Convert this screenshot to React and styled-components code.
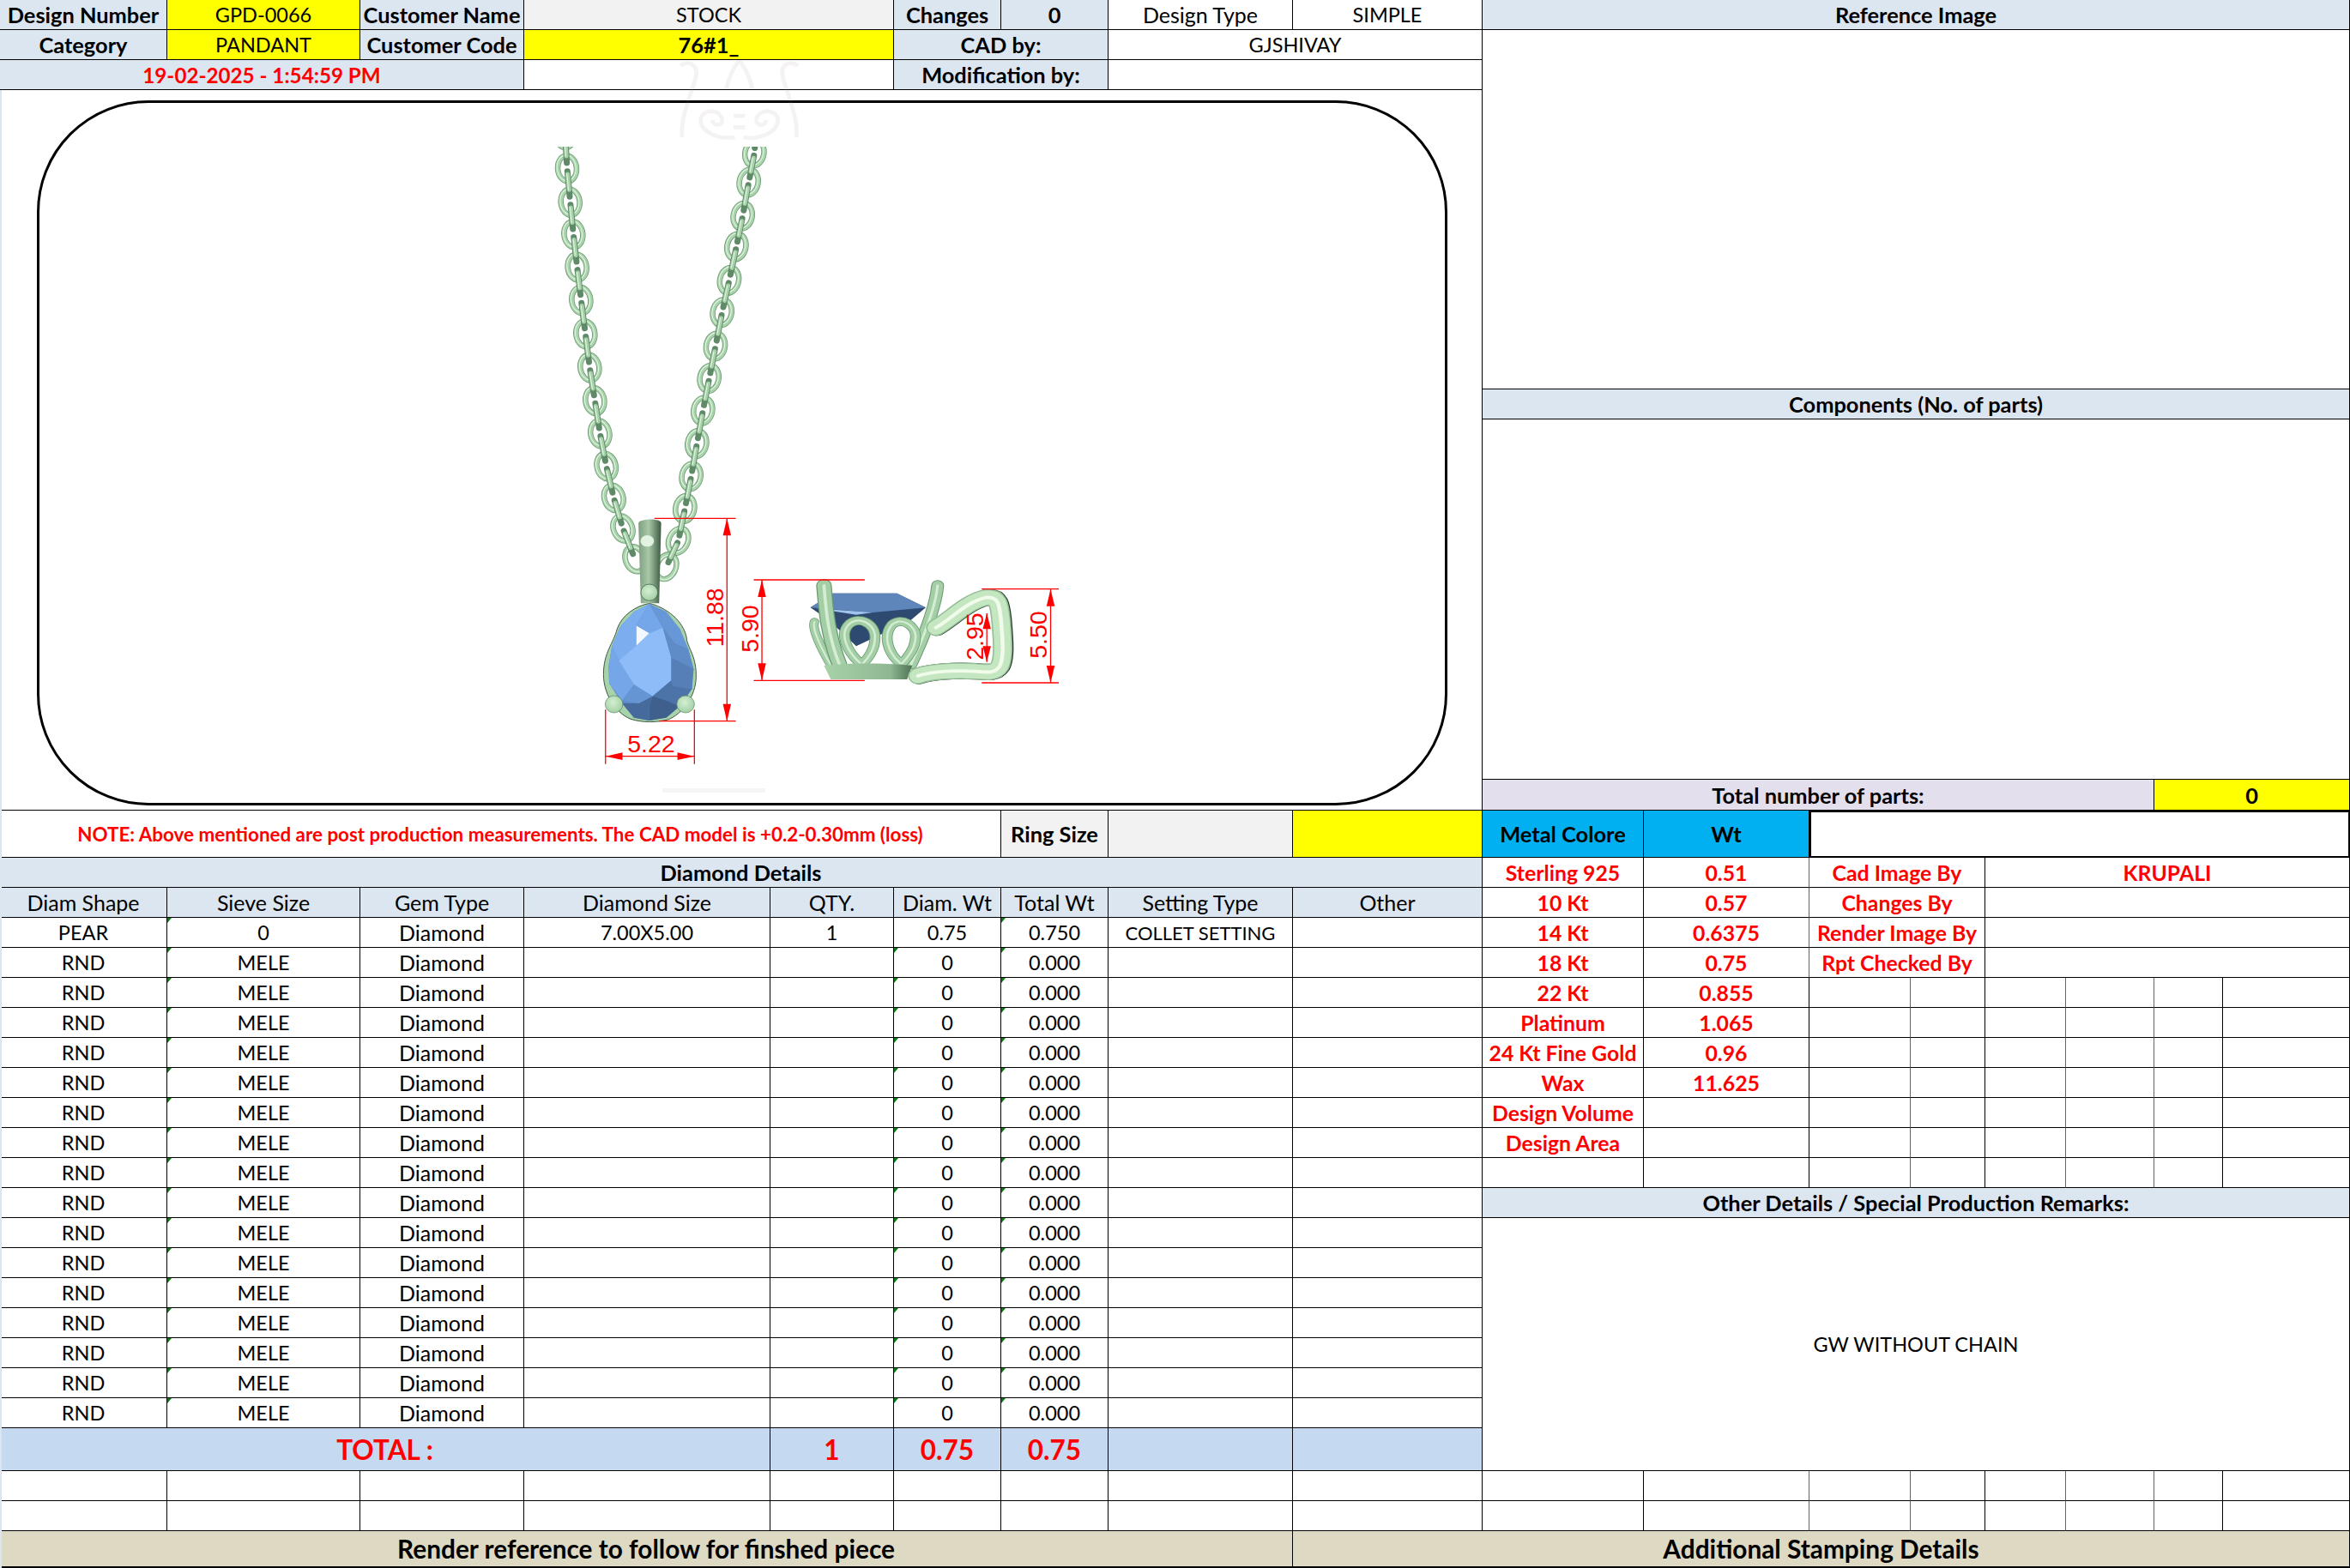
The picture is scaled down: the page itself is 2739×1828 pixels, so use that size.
import React from 'react';
import styled, { createGlobalStyle } from 'styled-components';

const GlobalStyle = createGlobalStyle`
  html, body {
    margin: 0;
    background: #fff;
  }
`;

const Sheet = styled.div`
  position: relative;
  display: grid;
  width: 2739px;
  height: 1828px;
  grid-template-columns: 195px 225px 191px 287px 144px 125px 125px 215px 221px 188px 193px 118px 87px 94px 103px 80px 148px;
  grid-template-rows: 35px 35px 35px 349px 35px 420px 36px 55px repeat(19, 35px) 50px 35px 35px 43px;
  font-family: Lato, 'Open Sans', sans-serif;
  font-size: 25px;
  color: #000;
  background: #fff;
  &::after {
    content: '';
    position: absolute;
    left: 0;
    top: 105px;
    bottom: 0;
    width: 2px;
    background: #dce6f1;
  }
`;

const Cell = styled.div`
  position: relative;
  box-sizing: border-box;
  display: flex;
  align-items: center;
  justify-content: center;
  grid-column: ${(p) => p.$c} / span ${(p) => p.$s || 1};
  grid-row: ${(p) => p.$r} / span ${(p) => p.$rs || 1};
  border-right: 1px solid ${(p) => (p.$thin ? '#666' : '#000')};
  border-bottom: 1px solid #000;
  background: ${(p) => p.$bg || '#fff'};
  white-space: nowrap;
  ${(p) => p.$note && `
    &::before {
      content: '';
      position: absolute;
      left: 0;
      top: 0;
      border-top: 6px solid #0a7a12;
      border-right: 5px solid transparent;
    }
  `}
`;

const Value = styled(Cell)`
  font-size: 23.5px;
`;

const SettingValue = styled(Value)`
  font-size: 22px;
`;

const Label = styled(Cell)`
  background: ${(p) => p.$bg || '#dce6f1'};
  font-size: 25.4px;
  font-weight: 700;
`;

const RedLabel = styled(Cell)`
  color: #ff0000;
  font-size: 24.8px;
  font-weight: 700;
`;

const DateCell = styled(RedLabel)`
  background: #dce6f1;
  font-size: 24.2px;
`;

const NoteCell = styled(RedLabel)`
  font-size: 22.4px;
`;

const TotalCell = styled(Cell)`
  background: #c5d9f1;
  color: #ff0000;
  font-size: 31.5px;
  font-weight: 700;
`;

const FooterCell = styled(Cell)`
  background: #ddd9c3;
  font-size: 29.8px;
  font-weight: 700;
  border-bottom: 2px solid #000;
`;

const MetalHead = styled(Label)`
  background: #00b0f0;
`;

const ThickBox = styled(Cell)`
  border: 2px solid #000;
`;

const DrawingCell = styled(Cell)`
  padding: 12px 40px 5px 43px;
  align-items: stretch;
`;

const Frame = styled.div`
  box-sizing: border-box;
  flex: 1;
  border: 3px solid #000;
  border-radius: 130px;
  overflow: hidden;
`;

const Drawing = styled.svg`
  display: block;
  width: 100%;
  height: 100%;
`;

const Watermark = styled.svg`
  position: absolute;
  left: 786px;
  top: 70px;
  width: 155px;
  height: 102px;
  opacity: 0.1;
`;

const DimText = styled.text`
  font-family: 'Liberation Sans', Arial, sans-serif;
  font-size: 28.5px;
  fill: #ff0000;
`;

// chain link centres read off the render, page coordinates
const toPage = ([x, y]) => [600 + x / 3, 150 + y / 2.8];
const leftStrand = [[176, 20], [183, 130], [194, 240], [205, 345], [218, 452], [232, 560], [247, 670], [262, 780], [280, 888], [298, 995], [320, 1102], [346, 1205], [378, 1305], [420, 1405]].map(toPage);
const rightStrand = [[845, -20], [838, 80], [818, 175], [797, 285], [775, 385], [750, 495], [725, 600], [702, 710], [680, 815], [658, 920], [637, 1028], [617, 1135], [595, 1240], [572, 1345], [530, 1430]].map(toPage);

const Chain = ({ points }) => (
  <g fill="none" strokeLinecap="round">
    {points.map(([x, y], i) => {
      const next = points[i + 1] || points[i - 1];
      const deg = (Math.atan2(next[1] - y, next[0] - x) * 180) / Math.PI - 90;
      return (
        <g key={i} transform={`rotate(${deg} ${x} ${y})`}>
          <ellipse cx={x} cy={y} rx="11" ry="15" stroke="#6c9874" strokeWidth="6.4" />
          <ellipse cx={x} cy={y} rx="11" ry="15" stroke="#a9d3ab" strokeWidth="4.8" />
          <ellipse cx={x - 0.7} cy={y - 0.7} rx="11" ry="15" stroke="#e2f5e0" strokeWidth="1.1" />
        </g>
      );
    })}
    {points.slice(0, -1).map(([x, y], i) => {
      const [nx, ny] = points[i + 1];
      const dx = (nx - x) / 6;
      const dy = (ny - y) / 6;
      return (
        <g key={i}>
          <line x1={x + dx / 2} y1={y + dy / 2} x2={nx - dx} y2={ny - dy} stroke="#5f8a68" strokeWidth="7" />
          <line x1={x + dx} y1={y + dy} x2={nx - 2.2 * dx} y2={ny - 2.2 * dy} stroke="#a5d0a8" strokeWidth="5" />
          <line x1={x + dx - 0.8} y1={y + dy} x2={nx - 2.2 * dx - 0.8} y2={ny - 2.2 * dy} stroke="#e0f4de" strokeWidth="1.2" />
        </g>
      );
    })}
  </g>
);

const Tube = ({ d, w, dark = '#6a9a72', main = '#a4cfa6', light = '#d5eed3' }) => (
  <g fill="none" strokeLinecap="round" strokeLinejoin="round">
    <path d={d} stroke={dark} strokeWidth={w} />
    <path d={d} stroke={main} strokeWidth={w * 0.86} />
    <path d={d} stroke={light} strokeWidth={w * 0.2} />
  </g>
);

const facets = [
  ['#5d8ac4', '270,342 320,370 360,430 385,500 401,570 396,640 360,700 320,740 270,750 225,740 190,690 152,620 150,560 160,490 185,420 225,370'],
  ['#7cadef', '270,342 225,370 185,420 160,490 180,540 232,490 232,415'],
  ['#74a6ea', '270,342 232,415 270,445 310,425'],
  ['#6797d6', '270,342 310,425 345,480 385,500 360,430 320,370'],
  ['#74a6e8', '150,560 160,490 180,540 225,625 190,680 152,620'],
  ['#8dbcf8', '232,488 270,445 310,425 335,530 335,610 280,665 225,625 180,540'],
  ['#f2f8ff', '232,418 270,445 232,488'],
  ['#5f8cc6', '310,425 345,480 385,500 400,570 335,530'],
  ['#557fb6', '335,530 400,570 395,640 340,630 335,610'],
  ['#4d74a8', '335,610 340,630 395,640 360,700 320,680 280,665'],
  ['#6595d2', '225,625 280,665 240,690 190,680'],
  ['#3f5f8c', '280,665 320,680 360,700 320,740 270,750 270,700'],
  ['#466a9c', '240,690 280,665 270,700 270,750 225,740 190,690'],
];

const RedLine = ({ d }) => <path d={d} fill="none" stroke="#ff0000" strokeWidth="1.3" vectorEffect="non-scaling-stroke" />;

const Arrow = ({ points }) => <polygon points={points} fill="#ff0000" />;

const bailSide = 'M1115 425 C1160 395 1205 335 1262 320 C1298 315 1302 340 1307 400 C1312 470 1316 530 1303 560 C1290 585 1268 582 1230 578 C1170 574 1100 578 1062 594';

// pendant shapes use the coordinates of the enlarged crop, hence the uneven scale
const Pendant = () => (
  <g transform="translate(650 590) scale(0.3954 0.3333)">
    <path d="M270 340 C230 350 190 380 175 430 C165 480 135 510 135 590 C135 650 165 720 215 745 C250 758 295 758 330 745 C380 715 410 650 408 590 C408 520 380 490 380 460 C370 400 320 355 270 340 Z" fill="#a8d2aa" stroke="#2f4a37" strokeWidth="2.5" />
    <path d="M238 60 C238 45 305 40 305 60 L299 340 L245 340 Z" fill="url(#bailGrad)" />
    <ellipse cx="264" cy="122" rx="20" ry="20" fill="#eaf7e8" opacity="0.9" />
    {facets.map(([fill, points]) => <polygon key={points} points={points} fill={fill} />)}
    <ellipse cx="270" cy="302" rx="25" ry="29" fill="url(#ball)" stroke="#3f5e47" strokeWidth="2" />
    <ellipse cx="166" cy="693" rx="26" ry="30" fill="url(#ball)" stroke="#5d8a66" strokeWidth="2" />
    <ellipse cx="377" cy="693" rx="26" ry="30" fill="url(#ball)" stroke="#5d8a66" strokeWidth="2" />

    <path d="M745 355 L810 305 L1000 305 L1085 355 L1040 400 L880 490 L800 400 Z" fill="#2f4a70" />
    <path d="M745 355 L810 305 L1000 305 L1085 355 L930 372 Z" fill="#5e86ba" />
    <path d="M760 358 L930 372 L880 380 Z" fill="#9fc4ee" />
    <Tube d="M757 405 C748 425 775 495 805 555" w={28} />
    <Tube d="M785 278 C790 350 795 450 830 552" w={46} />
    <Tube d="M1120 278 C1115 340 1090 430 1042 552" w={38} />
    <Tube d="M892 550 C850 505 830 445 860 412 C890 385 930 410 935 450 C938 490 925 520 900 550" w={32} />
    <Tube d="M1010 550 C970 510 960 450 985 415 C1015 385 1055 420 1055 455 C1055 490 1040 520 1015 550" w={32} />
    <path d="M785 558 C860 548 970 548 1045 558 L1030 606 L805 606 Z" fill="url(#cupGrad)" />
    <path d={bailSide} fill="none" stroke="#1f2f24" strokeWidth="58" strokeLinecap="round" transform="translate(3 0)" />
    <Tube d={bailSide} w={58} dark="#93bf95" main="#c4e6c1" light="#f0fbea" />

    <RedLine d="M285 43 H525 M300 752 H525 M499 43 V752" />
    <Arrow points="499,43 487,103 511,103" />
    <Arrow points="499,752 487,692 511,692" />
    <RedLine d="M141 712 V902 M403 712 V902 M141 875 H403" />
    <Arrow points="141,875 191,862 191,888" />
    <Arrow points="403,875 353,862 353,888" />
    <RedLine d="M578 258 H905 M578 610 H905 M602 258 V610" />
    <Arrow points="602,258 590,318 614,318" />
    <Arrow points="602,610 590,550 614,550" />
    <RedLine d="M1250 290 H1477 M1250 618 H1477 M1453 290 V618" />
    <Arrow points="1453,290 1441,350 1465,350" />
    <Arrow points="1453,618 1441,558 1465,558" />
    <RedLine d="M1265 375 V545" />
    <Arrow points="1265,375 1253,430 1277,430" />
    <Arrow points="1265,545 1253,490 1277,490" />
  </g>
);

const Dim = ({ x, y, rotate, children }) => (
  <DimText x={x} y={y} textAnchor="middle" transform={rotate ? `rotate(-90 ${x} ${y})` : undefined}>{children}</DimText>
);

const PendantDrawing = () => (
  <Drawing viewBox="46 120 1638 816" preserveAspectRatio="none">
    <defs>
      <linearGradient id="bailGrad" x1="0" x2="1" y1="0" y2="0">
        <stop offset="0" stopColor="#7d9f80" />
        <stop offset="0.45" stopColor="#a7c9a7" />
        <stop offset="1" stopColor="#3c5a42" />
      </linearGradient>
      <linearGradient id="cupGrad" x1="0" x2="1" y1="0" y2="0">
        <stop offset="0" stopColor="#a8d2a8" />
        <stop offset="0.75" stopColor="#8fb892" />
        <stop offset="1" stopColor="#4f7254" />
      </linearGradient>
      <radialGradient id="ball" cx="0.45" cy="0.4" r="0.6">
        <stop offset="0" stopColor="#d4f0d2" />
        <stop offset="1" stopColor="#a3cfa5" />
      </radialGradient>
      <clipPath id="chainClip"><rect x="600" y="171" width="320" height="540" /></clipPath>
    </defs>
    <rect x="772" y="919" width="120" height="5" fill="#f5f5f5" />
    <g clipPath="url(#chainClip)">
      <Chain points={leftStrand} />
      <Chain points={rightStrand} />
    </g>
    <Pendant />
    <Dim x="843" y="720" rotate>11.88</Dim>
    <Dim x="884" y="733" rotate>5.90</Dim>
    <Dim x="1146" y="742" rotate>2.95</Dim>
    <Dim x="1220" y="740" rotate>5.50</Dim>
    <Dim x="759" y="877">5.22</Dim>
  </Drawing>
);

const metals = [
  ['Sterling 925', '0.51', 'Cad Image By', 'KRUPALI'],
  ['10 Kt', '0.57', 'Changes By'],
  ['14 Kt', '0.6375', 'Render Image By'],
  ['18 Kt', '0.75', 'Rpt Checked By'],
  ['22 Kt', '0.855'],
  ['Platinum', '1.065'],
  ['24 Kt Fine Gold', '0.96'],
  ['Wax', '11.625'],
  ['Design Volume'],
  ['Design Area'],
  [],
];

const gemRows = [
  { shape: 'PEAR', sieve: '0', size: '7.00X5.00', qty: '1', wt: '0.75', total: '0.750', setting: 'COLLET SETTING' },
  ...Array.from({ length: 16 }, () => ({ shape: 'RND', sieve: 'MELE', size: '', qty: '', wt: '0', total: '0.000', setting: '' })),
];

const gemHeads = ['Diam Shape', 'Sieve Size', 'Gem Type', 'Diamond Size', 'QTY.', 'Diam. Wt', 'Total Wt', 'Setting Type', 'Other'];
const thinCols = [11, 12, 14, 15];

const App = () => (
  <>
    <GlobalStyle />
    <Sheet>
      <Label $c={1} $r={1}>Design Number</Label>
      <Value $c={2} $r={1} $bg="#ffff00">GPD-0066</Value>
      <Label $c={3} $r={1}>Customer Name</Label>
      <Value $c={4} $s={2} $r={1} $bg="#f2f2f2">STOCK</Value>
      <Label $c={6} $r={1}>Changes</Label>
      <Label $c={7} $r={1}>0</Label>
      <Cell $c={8} $r={1}>Design Type</Cell>
      <Value $c={9} $r={1}>SIMPLE</Value>
      <Label $c={10} $s={8} $r={1}>Reference Image</Label>

      <Label $c={1} $r={2}>Category</Label>
      <Value $c={2} $r={2} $bg="#ffff00">PANDANT</Value>
      <Label $c={3} $r={2}>Customer Code</Label>
      <Label $c={4} $s={2} $r={2} $bg="#ffff00">76#1_</Label>
      <Label $c={6} $s={2} $r={2}>CAD by:</Label>
      <Value $c={8} $s={2} $r={2}>GJSHIVAY</Value>
      <Cell $c={10} $s={8} $r={2} $rs={3} />

      <DateCell $c={1} $s={3} $r={3}>19-02-2025 - 1:54:59 PM</DateCell>
      <Cell $c={4} $s={2} $r={3} />
      <Label $c={6} $s={2} $r={3}>Modification by:</Label>
      <Cell $c={8} $s={2} $r={3} />

      <DrawingCell $c={1} $s={9} $r={4} $rs={4}>
        <Frame><PendantDrawing /></Frame>
      </DrawingCell>

      <Label $c={10} $s={8} $r={5}>Components (No. of parts)</Label>
      <Cell $c={10} $s={8} $r={6} />
      <Label $c={10} $s={6} $r={7} $bg="#e4dfec">Total number of parts:</Label>
      <Label $c={16} $s={2} $r={7} $bg="#ffff00">0</Label>

      <NoteCell $c={1} $s={6} $r={8}>NOTE: Above mentioned are post production measurements. The CAD model is +0.2-0.30mm (loss)</NoteCell>
      <Label $c={7} $r={8} $bg="#f2f2f2">Ring Size</Label>
      <Cell $c={8} $r={8} $bg="#f2f2f2" />
      <Cell $c={9} $r={8} $bg="#ffff00" />
      <MetalHead $c={10} $r={8}>Metal Colore</MetalHead>
      <MetalHead $c={11} $r={8}>Wt</MetalHead>
      <ThickBox $c={12} $s={6} $r={8} />

      <Label $c={1} $s={9} $r={9}>Diamond Details</Label>
      {gemHeads.map((head, i) => (
        <Cell key={head} $c={i + 1} $r={10} $bg="#dce6f1">{head}</Cell>
      ))}
      {gemRows.map((row, i) => {
        const r = 11 + i;
        return (
          <React.Fragment key={r}>
            <Value $c={1} $r={r}>{row.shape}</Value>
            <Value $c={2} $r={r} $note>{row.sieve}</Value>
            <Cell $c={3} $r={r}>Diamond</Cell>
            <Value $c={4} $r={r}>{row.size}</Value>
            <Value $c={5} $r={r}>{row.qty}</Value>
            <Value $c={6} $r={r} $note={i > 0}>{row.wt}</Value>
            <Value $c={7} $r={r} $note>{row.total}</Value>
            <SettingValue $c={8} $r={r}>{row.setting}</SettingValue>
            <Cell $c={9} $r={r} />
          </React.Fragment>
        );
      })}
      <TotalCell $c={1} $s={4} $r={28}>TOTAL :</TotalCell>
      <TotalCell $c={5} $r={28}>1</TotalCell>
      <TotalCell $c={6} $r={28}>0.75</TotalCell>
      <TotalCell $c={7} $r={28}>0.75</TotalCell>
      <TotalCell $c={8} $r={28} />
      <TotalCell $c={9} $r={28} />

      {metals.map(([name, wt, by, who], i) => {
        const r = 9 + i;
        return (
          <React.Fragment key={r}>
            <RedLabel $c={10} $r={r}>{name}</RedLabel>
            <RedLabel $c={11} $r={r} $thin={i < 4}>{wt}</RedLabel>
            {i < 4 ? (
              <>
                <RedLabel $c={12} $s={2} $r={r}>{by}</RedLabel>
                <RedLabel $c={14} $s={4} $r={r}>{who}</RedLabel>
              </>
            ) : (
              [12, 13, 14, 15, 16, 17].map((c) => <Cell key={c} $c={c} $r={r} $thin={thinCols.includes(c)} />)
            )}
          </React.Fragment>
        );
      })}
      <Label $c={10} $s={8} $r={20}>Other Details / Special Production Remarks:</Label>
      <Value $c={10} $s={8} $r={21} $rs={8}>GW WITHOUT CHAIN</Value>

      {[29, 30].map((r) => (
        <React.Fragment key={r}>
          {Array.from({ length: 17 }, (_, i) => (
            <Cell key={i} $c={i + 1} $r={r} $thin={thinCols.includes(i + 1)} />
          ))}
        </React.Fragment>
      ))}
      <FooterCell $c={1} $s={8} $r={31}>Render reference to follow for finshed piece</FooterCell>
      <FooterCell $c={9} $s={9} $r={31}>Additional Stamping Details</FooterCell>

      <Watermark viewBox="78 30 465 306">
        <g fill="none" stroke="#a08c8c" strokeWidth="14">
          <path d="M100 50 C120 30 170 40 150 100 C130 170 100 230 105 300" />
          <path d="M290 300 C230 310 170 280 170 240 C170 205 230 195 245 235 C250 260 215 265 210 240" />
          <path d="M510 50 C490 30 440 40 460 100 C480 170 510 230 505 300" />
          <path d="M320 300 C380 310 440 280 440 240 C440 205 380 195 365 235 C360 260 395 265 400 240" />
          <path d="M260 130 C270 80 290 50 305 30 C320 50 340 80 350 130" />
          <path d="M285 225 H325 M285 265 H325" />
        </g>
      </Watermark>
    </Sheet>
  </>
);

export default App;
